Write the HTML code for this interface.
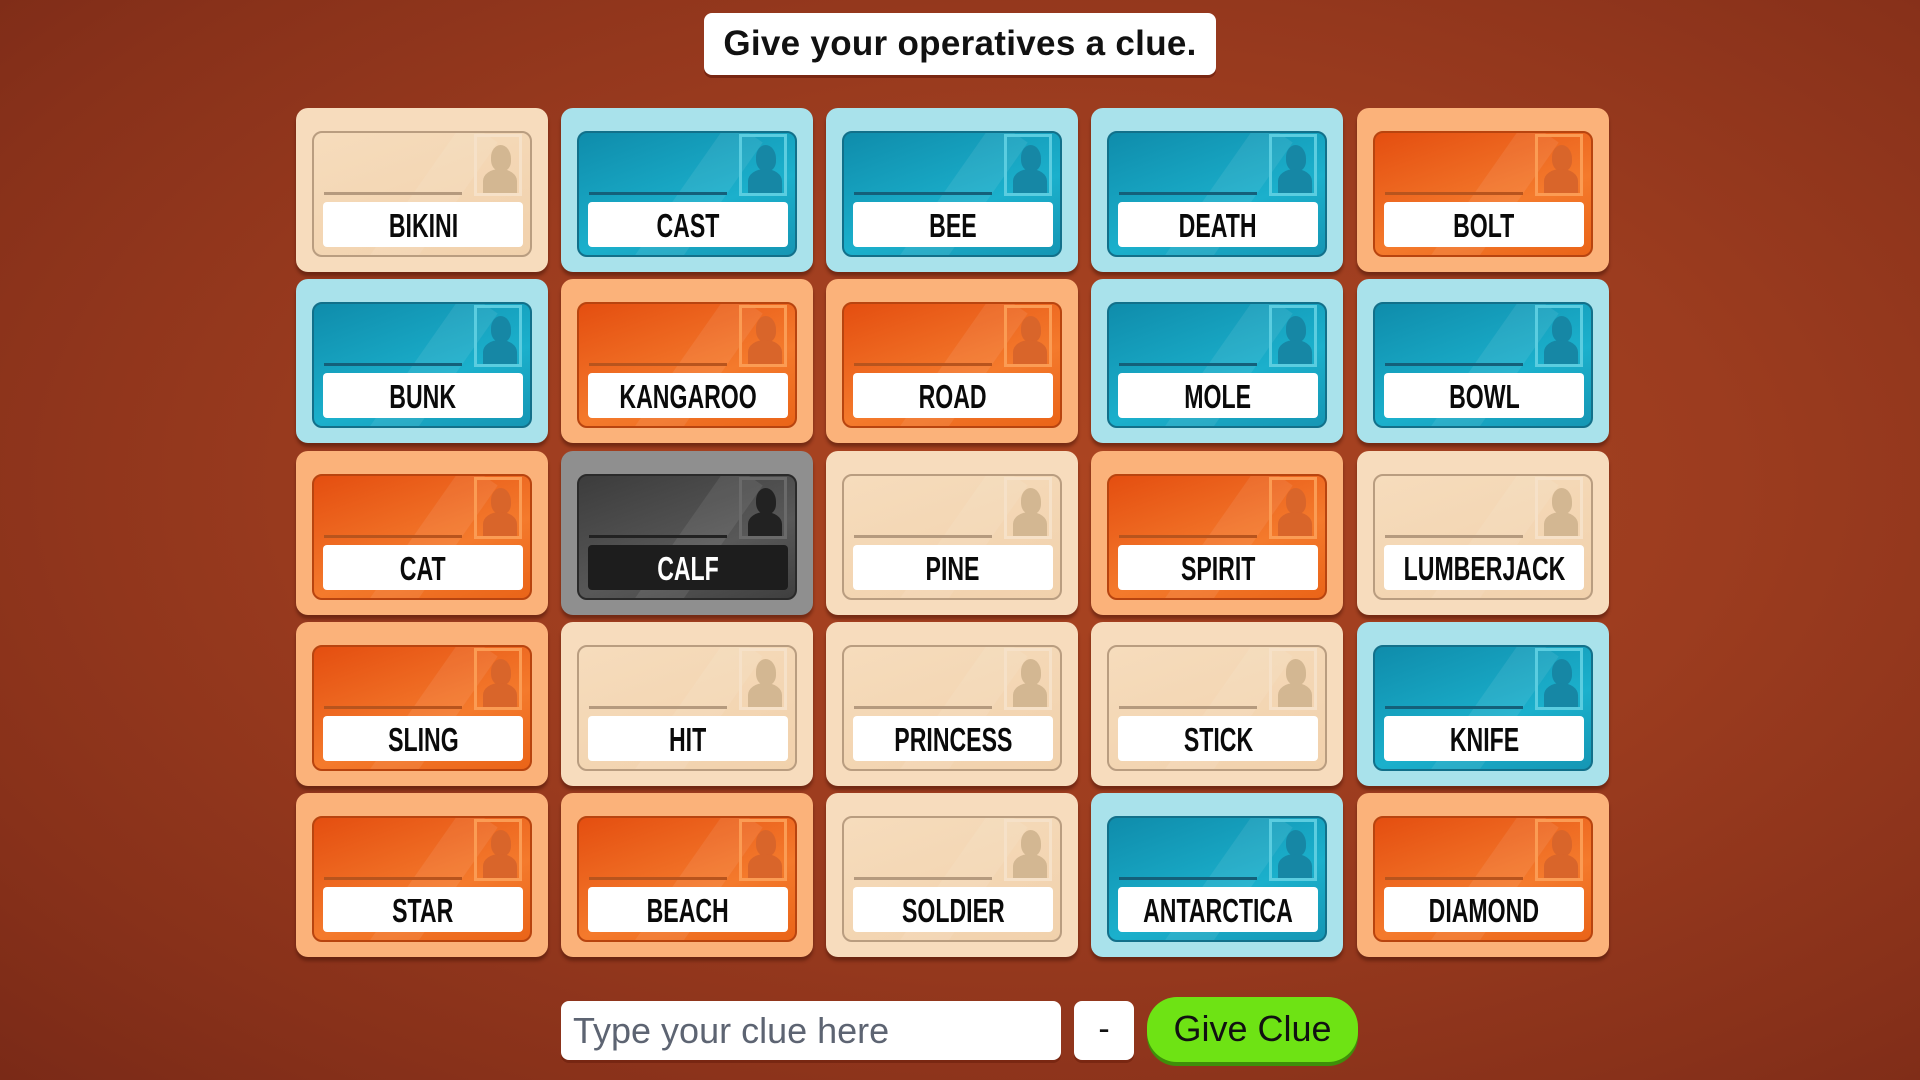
<!DOCTYPE html>
<html><head><meta charset="utf-8">
<style>
*{margin:0;padding:0;box-sizing:border-box}
body{width:1920px;height:1080px;overflow:hidden;position:relative;font-family:"Liberation Sans",sans-serif;
background:radial-gradient(ellipse at 55% 45%,#ac4521 0%,#9c3c1f 45%,#88311a 80%,#7a2a17 100%);}
.title{position:absolute;left:704px;top:13px;width:512px;height:62px;background:#fff;border-radius:8px;box-shadow:0 3px 0 rgba(90,20,5,.5);
text-align:center;font-weight:bold;font-size:35px;line-height:62px;color:#111;letter-spacing:0.3px}
.card{position:absolute;width:252px;height:164px;border-radius:12px;box-shadow:0 4px 3px rgba(60,15,5,.45)}
.in{position:absolute;left:16px;top:23px;right:16px;bottom:15px;border-radius:10px;border:2px solid rgba(0,0,0,.18);overflow:hidden}
.in::after{content:"";position:absolute;left:90px;top:-20px;width:40px;height:200px;background:rgba(255,255,255,.08);transform:rotate(35deg)}
.ln{position:absolute;left:28px;top:84px;width:138px;height:3px}
.ph{position:absolute;left:178px;top:26px;width:48px;height:62px;border:3px solid rgba(255,255,255,.3)}
.ph::before{content:"";position:absolute;left:14px;top:8px;width:20px;height:26px;border-radius:50% 55% 40% 45%;}
.ph::after{content:"";position:absolute;left:6px;top:32px;width:34px;height:24px;border-radius:50% 50% 0 0;}
.lb{position:absolute;left:27px;top:94px;width:200px;height:45px;background:#fff;border-radius:4px;text-align:center;line-height:47px;overflow:hidden}
.lb span{display:inline-block;font-weight:bold;font-size:33px;color:#0a0a0a;transform:scaleX(.7);white-space:nowrap;margin:0 -40px}
.n{background:#f7dcbd}.n .in{background:linear-gradient(160deg,#f6dcbc,#f1d1ac);border-color:#b99d80}.n .ln{background:#b59a7e}.n .ph{border-color:#f6e1c8}.n .ph::before,.n .ph::after{background:#d3b792}
.b{background:#a9e2eb}.b .in{background:linear-gradient(160deg,#0f8cab,#1bb0cc 60%,#1596b4);border-color:#12708a}.b .ln{background:#14607a}.b .ph{border-color:#5bcde0}.b .ph::before,.b .ph::after{background:#1687a5}
.o{background:#fbb27a}.o .in{background:linear-gradient(160deg,#e44e10,#f47a2c 60%,#ea6418);border-color:#b8440f}.o .ln{background:#b8541d}.o .ph{border-color:#fb9c54}.o .ph::before,.o .ph::after{background:#d9652a}
.k{background:#8f8f8f}.k .in{background:linear-gradient(160deg,#3c3c3c,#585858 60%,#3f3f3f);border-color:#2a2a2a}.k .ln{background:#222}.k .ph{border-color:#6a6a6a}.k .ph::before,.k .ph::after{background:#222}
.k .lb{background:#1d1d1d}.k .lb span{color:#fff}
.inp{position:absolute;left:561px;top:1001px;width:500px;height:59px;background:#fff;border-radius:8px;box-shadow:0 3px 0 rgba(90,20,5,.4);font-size:36px;color:#5d6472;line-height:59px;padding-left:12px}
.dash{position:absolute;left:1074px;top:1001px;width:60px;height:59px;background:#fff;border-radius:8px;box-shadow:0 3px 0 rgba(90,20,5,.4);font-size:34px;text-align:center;line-height:56px;color:#111}
.give{position:absolute;left:1147px;top:997px;width:211px;height:65px;background:#6ee314;border-radius:30px;box-shadow:0 4px 0 #3f8f0a;font-size:36px;color:#111;text-align:center;line-height:64px}
</style></head><body>
<div class="title">Give your operatives a clue.</div>

<div class="card n" style="left:296px;top:108px"><div class="in"></div><div class="ln"></div><div class="ph"></div><div class="lb"><span>BIKINI</span></div></div>
<div class="card b" style="left:561px;top:108px"><div class="in"></div><div class="ln"></div><div class="ph"></div><div class="lb"><span>CAST</span></div></div>
<div class="card b" style="left:826px;top:108px"><div class="in"></div><div class="ln"></div><div class="ph"></div><div class="lb"><span>BEE</span></div></div>
<div class="card b" style="left:1091px;top:108px"><div class="in"></div><div class="ln"></div><div class="ph"></div><div class="lb"><span>DEATH</span></div></div>
<div class="card o" style="left:1357px;top:108px"><div class="in"></div><div class="ln"></div><div class="ph"></div><div class="lb"><span>BOLT</span></div></div>

<div class="card b" style="left:296px;top:279px"><div class="in"></div><div class="ln"></div><div class="ph"></div><div class="lb"><span>BUNK</span></div></div>
<div class="card o" style="left:561px;top:279px"><div class="in"></div><div class="ln"></div><div class="ph"></div><div class="lb"><span>KANGAROO</span></div></div>
<div class="card o" style="left:826px;top:279px"><div class="in"></div><div class="ln"></div><div class="ph"></div><div class="lb"><span>ROAD</span></div></div>
<div class="card b" style="left:1091px;top:279px"><div class="in"></div><div class="ln"></div><div class="ph"></div><div class="lb"><span>MOLE</span></div></div>
<div class="card b" style="left:1357px;top:279px"><div class="in"></div><div class="ln"></div><div class="ph"></div><div class="lb"><span>BOWL</span></div></div>

<div class="card o" style="left:296px;top:451px"><div class="in"></div><div class="ln"></div><div class="ph"></div><div class="lb"><span>CAT</span></div></div>
<div class="card k" style="left:561px;top:451px"><div class="in"></div><div class="ln"></div><div class="ph"></div><div class="lb"><span>CALF</span></div></div>
<div class="card n" style="left:826px;top:451px"><div class="in"></div><div class="ln"></div><div class="ph"></div><div class="lb"><span>PINE</span></div></div>
<div class="card o" style="left:1091px;top:451px"><div class="in"></div><div class="ln"></div><div class="ph"></div><div class="lb"><span>SPIRIT</span></div></div>
<div class="card n" style="left:1357px;top:451px"><div class="in"></div><div class="ln"></div><div class="ph"></div><div class="lb"><span>LUMBERJACK</span></div></div>

<div class="card o" style="left:296px;top:622px"><div class="in"></div><div class="ln"></div><div class="ph"></div><div class="lb"><span>SLING</span></div></div>
<div class="card n" style="left:561px;top:622px"><div class="in"></div><div class="ln"></div><div class="ph"></div><div class="lb"><span>HIT</span></div></div>
<div class="card n" style="left:826px;top:622px"><div class="in"></div><div class="ln"></div><div class="ph"></div><div class="lb"><span>PRINCESS</span></div></div>
<div class="card n" style="left:1091px;top:622px"><div class="in"></div><div class="ln"></div><div class="ph"></div><div class="lb"><span>STICK</span></div></div>
<div class="card b" style="left:1357px;top:622px"><div class="in"></div><div class="ln"></div><div class="ph"></div><div class="lb"><span>KNIFE</span></div></div>

<div class="card o" style="left:296px;top:793px"><div class="in"></div><div class="ln"></div><div class="ph"></div><div class="lb"><span>STAR</span></div></div>
<div class="card o" style="left:561px;top:793px"><div class="in"></div><div class="ln"></div><div class="ph"></div><div class="lb"><span>BEACH</span></div></div>
<div class="card n" style="left:826px;top:793px"><div class="in"></div><div class="ln"></div><div class="ph"></div><div class="lb"><span>SOLDIER</span></div></div>
<div class="card b" style="left:1091px;top:793px"><div class="in"></div><div class="ln"></div><div class="ph"></div><div class="lb"><span>ANTARCTICA</span></div></div>
<div class="card o" style="left:1357px;top:793px"><div class="in"></div><div class="ln"></div><div class="ph"></div><div class="lb"><span>DIAMOND</span></div></div>

<div class="inp">Type your clue here</div>
<div class="dash">-</div>
<div class="give">Give Clue</div>
</body></html>
